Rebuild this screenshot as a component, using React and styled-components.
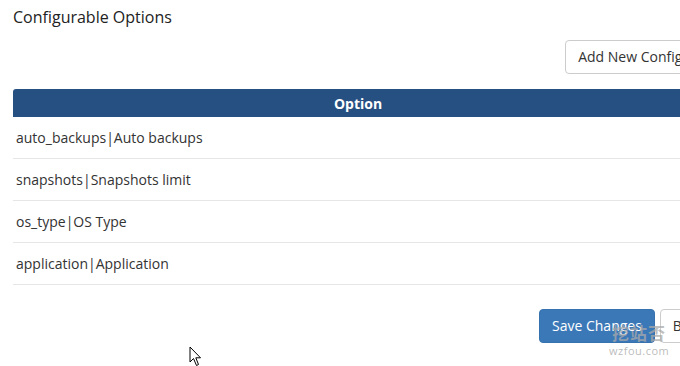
import React from "react";
import styled, { createGlobalStyle } from "styled-components";

const GlobalStyle = createGlobalStyle`
  html, body {
    margin: 0;
    padding: 0;
    background: #ffffff;
    overflow: hidden;
  }
  body {
    font-family: "Open Sans", "Liberation Sans", sans-serif;
    color: #333333;
  }
`;

const Page = styled.div`
  position: relative;
  width: 773px;
  height: 366px;
  padding: 6px 0 0 13px;
`;

const Title = styled.h2`
  margin: 0;
  font-size: 16px;
  line-height: 22px;
  font-weight: 400;
  color: #222222;
`;

const Toolbar = styled.div`
  display: flex;
  justify-content: flex-end;
  margin-top: 12px;
`;

const Button = styled.button`
  font-family: inherit;
  font-size: 14px;
  line-height: 20px;
  height: 34px;
  padding: 6px 12px;
  border-radius: 4px;
  white-space: nowrap;
  cursor: pointer;
  border: 1px solid ${(p) => (p.$primary ? "#3672ae" : "#cccccc")};
  background: ${(p) => (p.$primary ? "#3b78b8" : "#ffffff")};
  color: ${(p) => (p.$primary ? "#ffffff" : "#333333")};
`;

const Table = styled.div`
  margin-top: 15px;
  width: 100%;
`;

const HeadRow = styled.div`
  display: grid;
  grid-template-columns: 690px 1fr;
  height: 28px;
  background: #264f82;
  border-radius: 3px 3px 0 0;
  color: #ffffff;
  font-weight: 700;
  font-size: 14px;
  align-items: center;
  text-align: center;
`;

const Row = styled.div`
  display: flex;
  align-items: center;
  height: 41px;
  padding-left: 3px;
  border-bottom: 1px solid #e6e6e6;
  font-size: 14px;
  color: #333333;
`;

const Footer = styled.div`
  display: flex;
  gap: 5px;
  margin-top: 24px;
  padding-left: 526px;
`;

const Watermark = styled.div`
  position: absolute;
  left: 609px;
  top: 322px;
  display: flex;
  flex-direction: column;
  align-items: center;
  pointer-events: none;
  font-family: "Noto Sans CJK SC", "Open Sans", sans-serif;
`;

const MarkCn = styled.span`
  font-size: 17px;
  font-weight: 700;
  line-height: 22px;
  letter-spacing: 1px;
  color: rgba(170, 170, 170, 0.75);
`;

const MarkEn = styled.span`
  font-family: "Open Sans", sans-serif;
  font-size: 11px;
  line-height: 14px;
  letter-spacing: 0.5px;
  color: rgba(180, 180, 180, 0.9);
`;

const Cursor = styled.svg`
  position: absolute;
  left: 189px;
  top: 346px;
`;

const options = [
  ["auto_backups", "Auto backups"],
  ["snapshots", "Snapshots limit"],
  ["os_type", "OS Type"],
  ["application", "Application"],
];

export default function App() {
  return (
    <>
      <GlobalStyle />
      <Page>
        <Title>Configurable Options</Title>
        <Toolbar>
          <Button>Add New Configurable Option</Button>
        </Toolbar>
        <Table>
          <HeadRow>
            <span>Option</span>
            <span />
          </HeadRow>
          {options.map(([key, label]) => (
            <Row key={key}>
              {key}|{label}
            </Row>
          ))}
        </Table>
        <Footer>
          <Button $primary>Save Changes</Button>
          <Button>Back to Product List</Button>
        </Footer>
        <Watermark>
          <MarkCn>挖站否</MarkCn>
          <MarkEn>wzfou.com</MarkEn>
        </Watermark>
        <Cursor width="14" height="21" viewBox="0 0 14 21">
          <path
            d="M1 1 L1 16 L4.5 12.5 L7.5 19.5 L9.5 18.5 L6.8 11.8 L11.5 11.8 Z"
            fill="#ffffff"
            stroke="#000000"
            strokeWidth="1"
            strokeLinejoin="round"
          />
        </Cursor>
      </Page>
    </>
  );
}
